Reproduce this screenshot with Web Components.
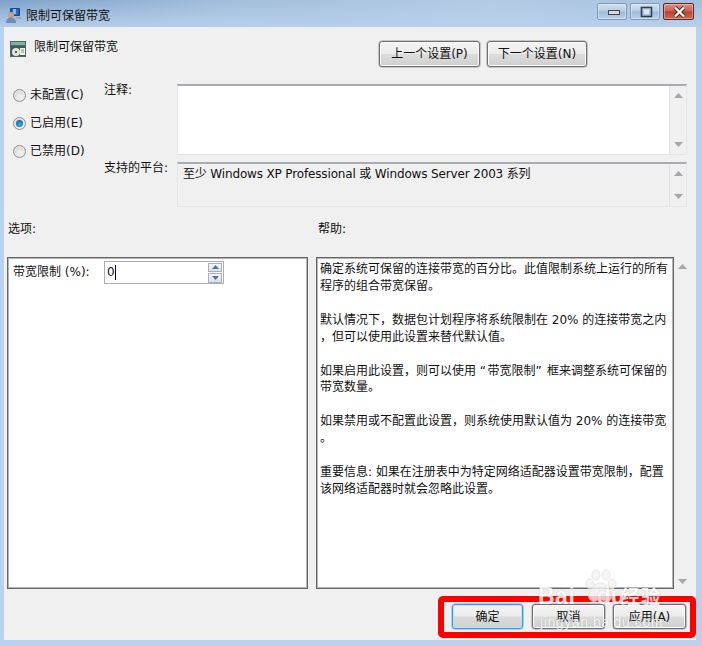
<!DOCTYPE html>
<html lang="zh"><head><meta charset="utf-8"><style>
html,body{margin:0;padding:0;width:702px;height:646px;overflow:hidden;background:#b9d1ec}
body{font:12px/17px "DejaVu Sans","Noto Sans CJK SC",sans-serif;color:#111}
.q{letter-spacing:1.5px}
</style></head><body>
<gp-window>
  <span slot="title">限制可保留带宽</span>
  <gp-header slot="client">限制可保留带宽</gp-header>
  <gp-settings slot="client"></gp-settings>
  <gp-row-labels slot="client"></gp-row-labels>
  <gp-panels slot="client">
    <gp-spinner slot="options" label="带宽限制 (%):" value="0"></gp-spinner>
    <span slot="help">确定系统可保留的连接带宽的百分比。此值限制系统上运行的所有<br>程序的组合带宽保留。<br><br>默认情况下，数据包计划程序将系统限制在 20% 的连接带宽之内<br>，但可以使用此设置来替代默认值。<br><br>如果启用此设置，则可以使用 <span class="q">“</span>带宽限制<span class="q">”</span> 框来调整系统可保留的<br>带宽数量。<br><br>如果禁用或不配置此设置，则系统使用默认值为 20% 的连接带宽<br>。<br><br>重要信息: 如果在注册表中为特定网络适配器设置带宽限制，配置<br>该网络适配器时就会忽略此设置。</span>
  </gp-panels>
  <gp-footer slot="client"></gp-footer>
</gp-window>
<script>
const def=(n,html,init)=>customElements.define(n,class extends HTMLElement{
  constructor(){super();this.attachShadow({mode:'open'}).innerHTML=typeof html==='function'?html(this):html;}
  connectedCallback(){if(init)init(this)}
});
const up='<svg width="9" height="5" viewBox="0 0 9 5"><path d="M4.500 0 9 5H0z" fill="#a6a6a6"/></svg>';
const down='<svg width="9" height="5" viewBox="0 0 9 5"><path d="M0 0h9L4.500 5z" fill="#a6a6a6"/></svg>';

def('gp-button',`<style>
:host{box-sizing:border-box;height:26px;border:1px solid #6f6f6f;border-radius:3px;background:linear-gradient(#f4f4f4,#ececec 48%,#dcdcdc 52%,#cfcfcf);box-shadow:inset 0 0 0 1px #fbfbfb,0 0 0 .5px #9a9a9a;display:flex;align-items:center;justify-content:center;color:#111;white-space:nowrap}
:host([primary]){border-color:#3c9bd0;box-shadow:inset 0 0 0 1px #b4e6f8,0 0 0 .5px #57b5de}
span{display:block;padding-top:var(--tp,0)}
</style><span><slot></slot></span>`);

def('gp-caption',b=>{const k=b.getAttribute('kind');
 const g=k==='min'?'<rect x="10.500" y="6.500" width="11" height="4" fill="#d8d8d8" stroke="#444" stroke-width="1"/>':
 k==='max'?'<rect x="10.500" y="3.500" width="10" height="9" fill="none" stroke="#2f3f50" stroke-width="1.600"/><rect x="13" y="6" width="5" height="4" fill="#dce6f0"/>':
 '<path d="M11 3.500 20 12.500M20 3.500 11 12.500" stroke="#3c2a2a" stroke-width="4"/><path d="M11 3.500 20 12.500M20 3.500 11 12.500" stroke="#f2f2f2" stroke-width="2.400"/>';
 return `<style>:host{display:block;box-sizing:border-box;width:${k==='close'?31:30}px;height:17px;border:1px solid ${k==='close'?'#5a2a2a':'#7f9ab6'};border-radius:2px;background:${k==='close'?'linear-gradient(#dd8f80,#c9604f 48%,#b8412f 52%,#c86a56)':'linear-gradient(#d0e0f0,#b5cde5 48%,#9cbad8 52%,#bdd3ea)'};box-shadow:inset 0 0 0 1px rgba(255,255,255,.35)}svg{display:block;margin:0 auto}</style><svg width="30" height="15" viewBox="0 0 30 15">${g}</svg>`});

def('gp-window',`<style>
:host{display:block;width:702px;height:646px;box-sizing:border-box;background:#b9d1ec}
.title{height:27px;display:flex;align-items:center;background:linear-gradient(90deg,#7ea2c9,#a0bcda 30%,#b4cbe4 70%,#a3bedb);position:relative}
.title::before{content:"";position:absolute;inset:0;background:linear-gradient(rgba(255,255,255,0),rgba(185,209,236,.9))}
.title>*{position:relative}
.ico{margin:3px 5px 0 6px;display:block}
.name{flex:1;padding-top:5px;color:#111}
.ctl{display:flex;gap:3px;margin:-4px 8px 0 0}
.client{margin:0 6px 6px 4px;height:613px;background:#f0f0f0;display:flex;flex-direction:column;position:relative}
</style>
<div class="title">
<svg class="ico" width="15" height="16" viewBox="0 0 15 16"><rect x="4" y="1" width="10" height="8" rx="1" fill="#233f86"/><rect x="5.500" y="2" width="7" height="6" fill="#1c6fd0"/><rect x="7" y="2" width="3" height="5" fill="#7fbcf0"/><circle cx="5" cy="8" r="3" fill="#c9a283"/><path d="M0 16c0-4 2.500-5.500 5-5.500s5 1.500 5 5.500z" fill="#6f8fb5"/><path d="M10 10h5v2h-5z" fill="#9aa6b4"/></svg>
<span class="name"><slot name="title"></slot></span>
<div class="ctl"><gp-caption kind="min"></gp-caption><gp-caption kind="max"></gp-caption><gp-caption kind="close"></gp-caption></div>
</div>
<div class="client"><slot name="client"></slot><gp-highlight></gp-highlight><gp-watermark></gp-watermark></div>`);

def('gp-header',`<style>
:host{display:flex;height:27px;margin-top:14px;padding-left:6px;box-sizing:border-box}
.ic{display:block;flex:none}.t{margin:-2px 0 0 8px;width:345px;height:17px;line-height:17px}
.b{display:flex;gap:7px}.b gp-button:first-child{width:101px}.b gp-button:last-child{width:100px}
</style>
<svg class="ic" width="16" height="16" viewBox="0 0 16 16"><rect width="16" height="16" fill="#4f6a66"/><rect x="1" y="1" width="14" height="3" fill="#7fb39a"/><rect x="1" y="5" width="14" height="10" fill="#3f5a62"/><circle cx="6" cy="11" r="4" fill="#e8e6d8"/><circle cx="6" cy="11" r="1.200" fill="#4f6a66"/><rect x="10" y="7" width="5" height="7" fill="#f4f4ec"/><path d="M11 9h3M11 11h3" stroke="#7a8a80"/></svg>
<div class="t"><slot></slot></div>
<div class="b"><gp-button>上一个设置(P)</gp-button><gp-button>下一个设置(N)</gp-button></div>`);

def('gp-radio',b=>`<style>
:host{display:flex;align-items:center;gap:4px;height:14px;white-space:nowrap}
i{display:block;box-sizing:border-box;width:13px;height:13px;border-radius:50%;border:1px solid #8e8f8f;background:radial-gradient(circle at 60% 65%,#f4f4f4,#d8d8d8 65%,#bcbcbc);box-shadow:inset 0 0 0 1px #ececec;position:relative}
:host([checked]) i::after{content:"";position:absolute;left:2px;top:2px;width:7px;height:7px;border-radius:50%;background:radial-gradient(circle at 55% 65%,#35b6e8,#0f6fa6 70%,#0c4a78);}
</style><i></i><span><slot></slot></span>`);

def('gp-box',b=>`<style>
:host{display:flex;box-sizing:border-box;width:510px;border:1px solid #e3e6ea;border-top:2px solid #a9abb3;background:${b.hasAttribute('ro')?'#f0f0f0':'#fff'}}
.c{flex:1;padding:2px 5px;line-height:17px;white-space:nowrap;letter-spacing:-.15px}
.s{width:17px;border-left:1px solid #e2e2e2;background:#f0f0f0;display:flex;flex-direction:column;justify-content:space-between;align-items:center;padding:7px 0;box-sizing:border-box}
svg{display:block}
</style><div class="c"><slot></slot></div><div class="s">${up}${down}</div>`);

def('gp-settings',`<style>
:host{display:flex;height:123px;margin-top:16px}
.r{width:100px;box-sizing:border-box;padding:4px 0 0 9px;display:flex;flex-direction:column;gap:14px}
.l{width:73px;display:flex;flex-direction:column;justify-content:space-between;height:93px}
.l span{display:block;margin-top:-2px}
.bx{display:flex;flex-direction:column;gap:7px}
gp-box:first-child{height:71px}gp-box:last-child{height:45px}
</style>
<div class="r"><gp-radio>未配置(C)</gp-radio><gp-radio checked>已启用(E)</gp-radio><gp-radio>已禁用(D)</gp-radio></div>
<div class="l"><span>注释:</span><span>支持的平台:</span></div>
<div class="bx"><gp-box></gp-box><gp-box ro>至少 Windows XP Professional 或 Windows Server 2003 系列</gp-box></div>`);

def('gp-row-labels',`<style>
:host{display:flex;height:16px;margin-top:14px;line-height:16px}
.a{margin-left:4px;width:310px}
</style><span class="a">选项:</span><span>帮助:</span>`);

def('gp-panels',`<style>
:host{display:flex;height:332px;margin-top:20px;padding-left:3px}
.p{box-sizing:border-box;border:1px solid #666;box-shadow:inset 0 0 0 1px #b4b4b4;background:#fff;height:332px}
.o{width:301px;padding:3px 0 0 5px}
.h{width:358px;margin-left:8px;padding:3px 0 0 3px;white-space:nowrap;line-height:16.92px}
.s{width:16px;background:#f0f0f0;box-sizing:border-box;display:flex;flex-direction:column;justify-content:space-between;align-items:center;padding:7px 0 5px}
svg{display:block}
</style><div class="p o"><slot name="options"></slot></div><div class="p h"><slot name="help"></slot></div><div class="s">${up}${down}</div>`);

def('gp-spinner',b=>`<style>
:host{display:flex;align-items:center;white-space:nowrap}
.l{width:91px}
.i{box-sizing:border-box;width:120px;height:23px;border:1px solid #abadb3;background:#fff;display:flex;align-items:center;padding-left:2px}
.v{flex:1;display:flex;align-items:center}.v b{display:inline-block;width:1px;height:15px;background:#000}
.sp{display:flex;flex-direction:column;gap:1px;margin-right:1px}
.sp div{box-sizing:border-box;width:14px;height:9.500px;border:1px solid #a9b0bd;background:linear-gradient(#f4f6fa,#d8dfea);display:flex;align-items:center;justify-content:center}
.sp svg{display:block}
</style><span class="l">${b.getAttribute('label')}</span><div class="i"><span class="v">${b.getAttribute('value')}<b></b></span><div class="sp"><div><svg width="7" height="4" viewBox="0 0 7 4"><path d="M3.500 0 7 4H0z" fill="#5b6f94"/></svg></div><div><svg width="7" height="4" viewBox="0 0 7 4"><path d="M0 0h7L3.500 4z" fill="#5b6f94"/></svg></div></div></div>`);

def('gp-footer',`<style>
:host{display:flex;gap:8px;justify-content:flex-end;margin-top:15px;padding-right:10px;--tp:1px}
gp-button{width:73px;height:25px}gp-button[primary]{width:71px;margin-right:1px}
</style><gp-button primary>确定</gp-button><gp-button>取消</gp-button><gp-button>应用(A)</gp-button>`);

def('gp-highlight',`<style>
:host{position:absolute;left:434px;top:569px;width:258px;height:42px;box-sizing:border-box;border:6px solid #f00;border-radius:5px;display:block;pointer-events:none}
</style>`);

def('gp-watermark',`<style>
:host{position:absolute;left:534px;top:541px;width:130px;height:72px;display:block;color:#fff;opacity:.8;pointer-events:none;font-family:"Liberation Sans","Noto Sans CJK SC",sans-serif;white-space:nowrap;text-shadow:0 0 1px rgba(110,110,110,.55)}
svg{position:absolute;left:44px;top:1px}
.a{position:absolute;top:15px;left:0;font-size:23px;font-weight:700;line-height:26px;letter-spacing:.5px}
.a2{position:absolute;top:15px;left:46px;font-size:23px;font-weight:700;line-height:26px}
.j{position:absolute;top:18px;left:83px;font-size:19px;font-weight:700;line-height:24px;letter-spacing:1px}
.u{position:absolute;top:46px;left:2px;font-size:14px;line-height:16px;letter-spacing:.6px}
</style>
<svg width="36" height="40" viewBox="0 0 36 40" fill="#f3f3f3" stroke="#dcdcdc" stroke-width=".8"><ellipse cx="8" cy="15" rx="4" ry="5"/><ellipse cx="14" cy="6" rx="4" ry="5"/><ellipse cx="24" cy="6" rx="4" ry="5"/><ellipse cx="30" cy="15" rx="4" ry="5"/><path d="M19 14c5 0 8 6 10 10s0 9-5 8-6-2-10 0-9-2-7-8 6-10 12-10z"/></svg>
<span class="a">Bai</span><span class="a2">&nbsp;&nbsp;du</span><span class="j">经验</span><span class="u">jingyan.baidu.com</span>`);
</script>
</body></html>
